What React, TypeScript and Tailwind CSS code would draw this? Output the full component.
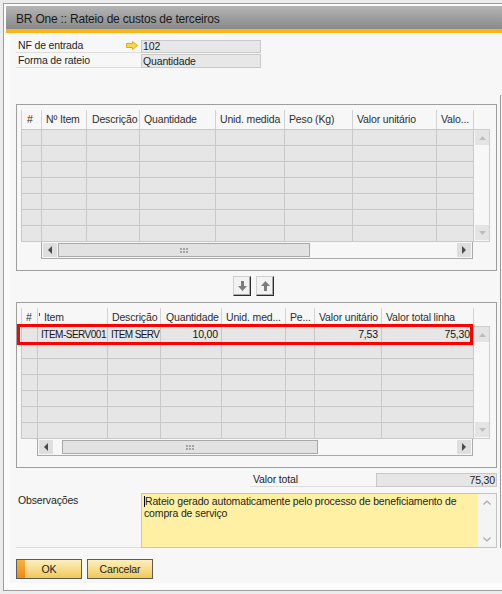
import React from 'react';

type Col = { w: string; pad: string; label: React.ReactNode };

const upperCols: Col[] = [
  { w: 'w-[20px]', pad: 'pl-[5px]', label: '#' },
  { w: 'w-[45px]', pad: 'pl-[4px]', label: 'Nº Item' },
  { w: 'w-[53px]', pad: 'pl-[5px]', label: 'Descrição' },
  { w: 'w-[76px]', pad: 'pl-[4px]', label: 'Quantidade' },
  { w: 'w-[69px]', pad: 'pl-[4px]', label: 'Unid. medida' },
  { w: 'w-[68px]', pad: 'pl-[4px]', label: 'Peso (Kg)' },
  { w: 'w-[84px]', pad: 'pl-[4px]', label: 'Valor unitário' },
  { w: 'w-[37px]', pad: 'pl-[4px]', label: 'Valo...' },
];

const lowerCols: Col[] = [
  { w: 'w-[16px]', pad: 'pl-[4px]', label: '#' },
  {
    w: 'w-[70px]',
    pad: 'pl-[1px]',
    label: (
      <>
        <span className="inline-block w-[1px] h-[3px] bg-[#555] self-start mt-[5px]" />
        <span className="ml-[4px]">Item</span>
      </>
    ),
  },
  { w: 'w-[53px]', pad: 'pl-[4px]', label: 'Descrição' },
  { w: 'w-[61px]', pad: 'pl-[5px]', label: 'Quantidade' },
  { w: 'w-[64px]', pad: 'pl-[4px]', label: 'Unid. med...' },
  { w: 'w-[29px]', pad: 'pl-[4px]', label: 'Pe...' },
  { w: 'w-[67px]', pad: 'pl-[4px]', label: 'Valor unitário' },
  { w: 'w-[92px]', pad: 'pl-[4px]', label: 'Valor total linha' },
];

type Cell = { text: string; right?: boolean; cls?: string };

function Tri({ dir, color }: { dir: 'up' | 'down' | 'left' | 'right'; color: string }) {
  if (dir === 'up')
    return (
      <svg width="7" height="4" viewBox="0 0 7 4">
        <path d="M0 4 L3.5 0 L7 4 Z" fill={color} />
      </svg>
    );
  if (dir === 'down')
    return (
      <svg width="7" height="4" viewBox="0 0 7 4">
        <path d="M0 0 L3.5 4 L7 0 Z" fill={color} />
      </svg>
    );
  if (dir === 'left')
    return (
      <svg width="4" height="8" viewBox="0 0 4 8">
        <path d="M4 0 L0 4 L4 8 Z" fill={color} />
      </svg>
    );
  return (
    <svg width="4" height="8" viewBox="0 0 4 8">
      <path d="M0 0 L4 4 L0 8 Z" fill={color} />
    </svg>
  );
}

function Grip() {
  return (
    <svg width="8" height="5" viewBox="0 0 8 5">
      {[0, 3, 6].map((x) =>
        [0, 3].map((y) => <rect key={`${x}-${y}`} x={x} y={y} width="2" height="2" fill="#a4a4a4" />)
      )}
    </svg>
  );
}

function VScroll({ top }: { top: string }) {
  return (
    <div className={`${top} w-[16px] h-[113px] border-t border-r border-b border-[#cdcdcd] flex flex-col justify-between pl-[1px] pb-[1px]`}>
      <div className="w-[14px] h-[15px] bg-[#e4e4e4] flex items-center justify-center">
        <Tri dir="up" color="#bdbdbd" />
      </div>
      <div className="w-[14px] h-[15px] bg-[#e4e4e4] flex items-center justify-center">
        <Tri dir="down" color="#bdbdbd" />
      </div>
    </div>
  );
}

function HScroll({ box, leftBtn, thumb }: { box: string; leftBtn: string; thumb: string }) {
  return (
    <div className={`${box} h-[17px] border-l border-r border-b border-[#a9a9a9] flex items-start pt-[1px]`}>
      <div className={`${leftBtn} h-[14px] bg-[#dedede] flex items-center justify-center`}>
        <Tri dir="left" color="#4a4a4a" />
      </div>
      <div className={`${thumb} h-[14px] border border-[#a8a8a8] bg-[#e2e2e2] flex items-center justify-center`}>
        <Grip />
      </div>
      <div className="flex-1" />
      <div className="w-[14px] mr-[1px] h-[14px] bg-[#dedede] flex items-center justify-center">
        <Tri dir="right" color="#4a4a4a" />
      </div>
    </div>
  );
}

function Grid({
  cols,
  headerH,
  vTop,
  rows,
  hbox,
  hleft,
  hthumb,
}: {
  cols: Col[];
  headerH: string;
  vTop: string;
  rows: Cell[][];
  hbox: string;
  hleft: string;
  hthumb: string;
}) {
  return (
    <div className="flex">
      <div className="w-[453px] flex flex-col">
        <div className={`${headerH} flex border-l border-[#d2d2d2]`}>
          {cols.map((c, i) => (
            <div
              key={i}
              className={`${c.w} ${c.pad} shrink-0 h-full border-r border-[#d2d2d2] flex items-center overflow-hidden whitespace-nowrap text-[#2e2e2e]`}
            >
              {c.label}
            </div>
          ))}
        </div>
        <div className="border-l border-b border-[#c8c8c8]">
          {rows.map((r, ri) => (
            <div key={ri} className="flex h-[16px] border-t border-[#c8c8c8]">
              {cols.map((c, ci) => {
                const cell = r[ci];
                return (
                  <div
                    key={ci}
                    className={`${c.w} shrink-0 h-full bg-[#e6e6e6] border-r border-[#c8c8c8] flex items-center overflow-hidden whitespace-nowrap text-[#141414] ${
                      cell && cell.right ? 'justify-end pr-[3px]' : 'pl-[3px]'
                    }`}
                  >
                    {cell && cell.text ? <span className={cell.cls || ''}>{cell.text}</span> : null}
                  </div>
                );
              })}
            </div>
          ))}
        </div>
        <HScroll box={hbox} leftBtn={hleft} thumb={hthumb} />
      </div>
      <VScroll top={vTop} />
    </div>
  );
}

function Arrow({ dir }: { dir: 'up' | 'down' }) {
  return (
    <div className="w-[18px] h-[20px] bg-[#f2f2f2] border-t border-l border-t-[#d0d0d0] border-l-[#d0d0d0] border-r border-b border-r-[#2e2e2e] border-b-[#2e2e2e] shadow-[inset_-1px_-1px_0_#a8a8a8] flex items-center justify-center">
      <svg width="9" height="10" viewBox="0 0 9 10">
        {dir === 'down' ? (
          <path d="M3 0 H6 V5 H9 L4.5 10 L0 5 H3 Z" fill="#7c7c7c" />
        ) : (
          <path d="M4.5 0 L9 5 H6 V10 H3 V5 H0 Z" fill="#7c7c7c" />
        )}
      </svg>
    </div>
  );
}

const emptyRows: Cell[][] = Array.from({ length: 7 }, () => []);
const lowerRows: Cell[][] = [
  [
    { text: '' },
    { text: 'ITEM-SERV001', cls: 'text-[10px] tracking-[-0.5px]' },
    { text: 'ITEM SERV', cls: 'text-[10px] tracking-[-0.6px]' },
    { text: '10,00', right: true },
    { text: '' },
    { text: '' },
    { text: '7,53', right: true },
    { text: '75,30', right: true },
  ],
  ...Array.from({ length: 6 }, () => [] as Cell[]),
];

export default function App() {
  return (
    <div className="w-[502px] h-[594px] overflow-hidden bg-[#ececec] pt-[3px] pl-[3px] font-['Liberation_Sans',Arial,sans-serif] text-[10.5px] tracking-[-0.15px] leading-[13px] text-[#1e1e1e]">
      <div className="w-[520px] h-[588px] border border-[#9c9c9c] bg-[#fcfcfc] pt-[2px] pl-[2px] flex flex-col">
        <div className="h-[23px] shrink-0 bg-linear-to-b from-[#b5b5b5] to-[#898989] pl-[10px] pt-[6px] text-[12px] leading-[14px] tracking-[-0.2px] text-[#1a1a1a]">
          BR One :: Rateio de custos de terceiros
        </div>
        <div className="h-[4px] shrink-0 bg-[#f9b515]" />
        <div className="h-[550px] shrink-0 ml-[4px] bg-[#f7f7f7] flex">
          <div className="w-[490px] shrink-0 pl-[6px] pt-[6px] flex flex-col">
            {/* NF de entrada */}
            <div className="flex h-[14px]">
              <div className="w-[125px] flex items-center border-b border-[#dedede] pl-[2px]">
                <span>NF de entrada</span>
                <svg className="ml-auto mr-[3px]" width="12" height="9" viewBox="0 0 12 9">
                  <path d="M0.5 2.5 H6.5 V0.5 L11.5 4.5 L6.5 8.5 V6.5 H0.5 Z" fill="#f8d64a" stroke="#e2ab12" strokeWidth="1" />
                </svg>
              </div>
              <div className="w-[120px] h-[13px] self-end bg-[#e7e7e7] border border-[#c9c9c9] flex items-center pl-[1px]">102</div>
            </div>
            {/* Forma de rateio */}
            <div className="flex h-[14px] mt-[1px]">
              <div className="w-[125px] flex items-center border-b border-[#dedede] pl-[2px]">Forma de rateio</div>
              <div className="w-[120px] h-[14px] bg-[#e7e7e7] border border-[#c9c9c9] flex items-center pl-[1px]">Quantidade</div>
            </div>

            {/* Upper grid */}
            <div className="mt-[36px] w-[481px] border border-[#9f9f9f] pt-[5px] pl-[4px] pb-[11px]">
              <Grid
                cols={upperCols}
                headerH="h-[19px]"
                vTop="mt-[19px]"
                rows={emptyRows}
                hbox="ml-[20px] w-[432px]"
                hleft="w-[14px] ml-[1px]"
                hthumb="w-[252px] ml-[1px]"
              />
            </div>

            {/* Move buttons */}
            <div className="mt-[5px] h-[20px] flex gap-[5px] pl-[217px]">
              <Arrow dir="down" />
              <Arrow dir="up" />
            </div>

            {/* Lower grid */}
            <div className="relative mt-[6px] w-[481px] border border-[#9f9f9f] pt-[5px] pl-[4px] pb-[11px]">
              <Grid
                cols={lowerCols}
                headerH="h-[18px]"
                vTop="mt-[18px]"
                rows={lowerRows}
                hbox="ml-[16px] w-[436px]"
                hleft="w-[14px] ml-[1px]"
                hthumb="w-[256px] ml-[9px]"
              />
              <div className="absolute left-0 top-[21px] w-[456px] h-[21px] border-[3px] border-[#ff0000]" />
            </div>

            {/* Valor total */}
            <div className="mt-[5px] h-[14px] flex pl-[234px]">
              <div className="w-[126px] border-b border-[#dedede] flex items-center pl-[3px]">Valor total</div>
              <div className="w-[121px] bg-[#e6e6e6] border border-[#c8c8c8] flex items-center justify-end pr-[1px]">75,30</div>
            </div>

            {/* Observações */}
            <div className="mt-[6px] h-[55px] flex">
              <div className="w-[125px] border-b border-[#dedede] pl-[2px] pt-[1px]">Observações</div>
              <div className="w-[356px] border border-[#c4c4c4] flex">
                <div className="flex-1 bg-[#fff0a3] pl-[2px] pt-[1px] leading-[12px] whitespace-nowrap">
                  <span className="inline-block w-[1px] h-[11px] bg-black align-[-2px]" />
                  Rateio gerado automaticamente pelo processo de beneficiamento de
                  <br />
                  compra de serviço
                </div>
                <div className="w-[18px] bg-[#f4f4f4] flex flex-col justify-between items-center pt-[6px] pb-[5px]">
                  <svg width="8" height="5" viewBox="0 0 8 5">
                    <path d="M0.5 4.5 L4 1 L7.5 4.5" fill="none" stroke="#a8a8a8" strokeWidth="1.2" />
                  </svg>
                  <svg width="8" height="5" viewBox="0 0 8 5">
                    <path d="M0.5 0.5 L4 4 L7.5 0.5" fill="none" stroke="#a8a8a8" strokeWidth="1.2" />
                  </svg>
                </div>
              </div>
            </div>

            {/* Buttons */}
            <div className="mt-[11px] h-[20px] flex gap-[5px]">
              <div className="w-[66px] h-[20px] border border-[#5c5c5c] bg-linear-to-b from-[#fdefbd] to-[#f1c955] flex">
                <div className="w-[8px] h-full bg-linear-to-b from-[#f8b23c] to-[#ee8911]" />
                <div className="flex-1 pr-[8px] flex items-center justify-center text-[#222]">OK</div>
              </div>
              <div className="w-[66px] h-[20px] border border-[#5c5c5c] bg-linear-to-b from-[#fdefbd] to-[#f1c955] flex items-center justify-center text-[#222]">
                Cancelar
              </div>
            </div>
          </div>
          <div className="w-[2px] shrink-0">
            <div className="mt-[62px] h-[453px] border-l border-[#9a9a9a]" />
          </div>
        </div>
      </div>
    </div>
  );
}
